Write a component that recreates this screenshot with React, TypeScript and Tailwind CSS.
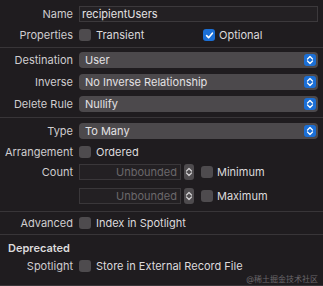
const font = { fontFamily: '"Inter", "Noto Sans CJK SC", sans-serif' };

const Label = ({ children }: { children: React.ReactNode }) => (
  <div className="w-[73px] shrink-0 text-right text-[11px] leading-none text-[#cfcdcf]">
    {children}
  </div>
);

const Check = ({ checked = false }: { checked?: boolean }) =>
  checked ? (
    <div className="flex h-[12px] w-[12px] shrink-0 items-center justify-center rounded-[3px] bg-[#1b6fd6]">
      <svg width="9" height="9" viewBox="0 0 10 10">
        <path d="M1.8 5.2 L4 7.4 L8.2 2.4" fill="none" stroke="white" strokeWidth="1.8" strokeLinecap="round" strokeLinejoin="round" />
      </svg>
    </div>
  ) : (
    <div className="h-[12px] w-[12px] shrink-0 rounded-[3px] bg-[#4e4b4e]" />
  );

const Stepper = ({ blue = false }: { blue?: boolean }) => (
  <svg width="8" height="10" viewBox="0 0 8 10">
    <path d="M1.5 4 L4 1.5 L6.5 4 M1.5 6 L4 8.5 L6.5 6" fill="none" stroke={blue ? "white" : "#cfcdcf"} strokeWidth="1.3" strokeLinecap="round" strokeLinejoin="round" />
  </svg>
);

const Popup = ({ value }: { value: string }) => (
  <div className="flex h-[16px] flex-1 items-center justify-between rounded-[4px] bg-[#4c494c] pl-[6px] pr-[2px]">
    <span className="text-[11px] leading-none text-[#e4e2e4]">{value}</span>
    <div className="flex h-[12px] w-[12px] items-center justify-center rounded-[3px] bg-[#1b6fd6]">
      <Stepper blue />
    </div>
  </div>
);

const Row = ({ label, children, className = "" }: { label: React.ReactNode; children: React.ReactNode; className?: string }) => (
  <div className={`flex items-center gap-[6px] pr-[5px] ${className}`}>
    <Label>{label}</Label>
    {children}
  </div>
);

const Sep = ({ className = "" }: { className?: string }) => <div className={`h-px bg-[#383538] ${className}`} />;

const Box = ({ text, checked = false, gap = "gap-[5px]" }: { text: string; checked?: boolean; gap?: string }) => (
  <div className={`flex items-center ${gap}`}>
    <Check checked={checked} />
    <span className="text-[11px] leading-none text-[#dcdadc]">{text}</span>
  </div>
);

const CountRow = ({ label, check, className = "" }: { label: string; check: string; className?: string }) => (
  <Row label={label} className={className}>
    <div className="flex h-[16px] w-[102px] items-center justify-end border border-[#3a373a] bg-[#232023] pr-[3px] text-[11px] leading-none text-[#6b686b]">
      Unbounded
    </div>
    <div className="-ml-[3px] flex h-[16px] w-[10px] items-center justify-center rounded-[3px] bg-[#4e4b4e]">
      <Stepper />
    </div>
    <div className="ml-[1px]">
      <Box text={check} gap="gap-[4px]" />
    </div>
  </Row>
);

export default function App() {
  return (
    <div style={font} className="flex h-[286px] w-[323px] flex-col overflow-hidden bg-[#1f1c1f] pt-[6px]">
      <Row label="Name">
        <div className="flex h-[16px] flex-1 items-center border border-[#3c393c] bg-[#232023] pl-[2px] text-[11px] leading-none text-[#e4e2e4]">
          recipientUsers
        </div>
      </Row>
      <Row label="Properties" className="mt-[7px] h-[12px]">
        <div className="w-[118px]">
          <Box text="Transient" />
        </div>
        <Box text="Optional" checked gap="gap-[4px]" />
      </Row>
      <Sep className="mt-[6px]" />
      <Row label="Destination" className="mt-[4px]">
        <Popup value="User" />
      </Row>
      <Row label="Inverse" className="mt-[6px]">
        <Popup value="No Inverse Relationship" />
      </Row>
      <Row label="Delete Rule" className="mt-[6px]">
        <Popup value="Nullify" />
      </Row>
      <Sep className="mt-[5px]" />
      <Row label="Type" className="mt-[5px]">
        <Popup value="To Many" />
      </Row>
      <Row label="Arrangement" className="mt-[7px] h-[12px]">
        <Box text="Ordered" />
      </Row>
      <CountRow label="Count" check="Minimum" className="mt-[6px]" />
      <CountRow label="" check="Maximum" className="mt-[8px]" />
      <Sep className="mt-[7px]" />
      <Row label="Advanced" className="mt-[5px] h-[12px]">
        <Box text="Index in Spotlight" />
      </Row>
      <Sep className="mt-[5px]" />
      <div className="mt-[6px] pl-[8px] text-[11px] font-semibold leading-[14px] text-[#dcdadc]">Deprecated</div>
      <Row label="Spotlight" className="mt-[5px] h-[12px]">
        <Box text="Store in External Record File" />
      </Row>
      <div className="mt-[2px] h-[10px] pr-[5px] text-right text-[8px] leading-[10px] text-[#6a676a]">@稀土掘金技术社区</div>
      <Sep className="mt-[1px]" />
    </div>
  );
}
